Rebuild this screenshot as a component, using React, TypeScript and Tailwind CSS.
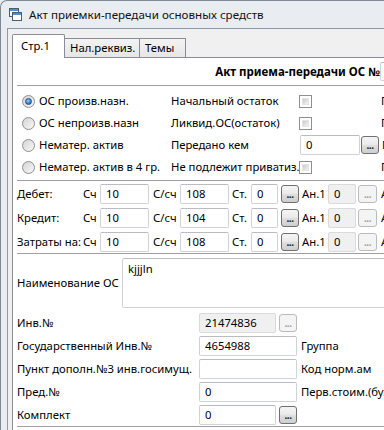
import clsx from 'clsx';

const font = "font-['Noto_Sans',sans-serif]";

function Box({ w, value, disabled, h = 'h-[20px]' }: { w: string; value?: string; disabled?: boolean; h?: string }) {
  return (
    <div
      className={clsx(
        'shrink-0 flex items-center overflow-hidden whitespace-nowrap rounded-[2px] border pl-[5px]',
        w,
        h,
        disabled ? 'bg-[#f0f0f0] border-[#d9dadc]' : 'bg-white border-[#cfd2d7] border-t-[#b9bcc2]'
      )}
    >
      {value}
    </div>
  );
}

function Dots({ disabled, w = 'w-[18px]', className }: { disabled?: boolean; w?: string; className?: string }) {
  return (
    <div
      className={clsx(
        'shrink-0 h-[18px] rounded-[3px] border flex items-end justify-center pb-[3px] text-[10px] leading-none font-bold tracking-[-0.5px]',
        w,
        className,
        disabled
          ? 'border-[#b8bcbf] bg-[#f4f4f4] text-[#a0a0a0]'
          : 'border-[#707070] bg-[linear-gradient(#f4f4f4,#ebebeb_45%,#dddddd_55%,#cfcfcf)] text-[#202020]'
      )}
    >
      ...
    </div>
  );
}

function Radio({ checked }: { checked?: boolean }) {
  return (
    <div className="shrink-0 w-[13px] h-[13px] rounded-full border border-[#8e8f8f] bg-[linear-gradient(135deg,#d4d4d4,#f8f8f8)] flex items-center justify-center">
      {checked && (
        <div className="w-[7px] h-[7px] rounded-full border border-[#1c4f8f] bg-[radial-gradient(circle_at_40%_35%,#8fd3ff,#2a6fc4_70%)]" />
      )}
    </div>
  );
}

function Check() {
  return (
    <div className="shrink-0 w-[13px] h-[13px] border border-[#8f8f8f] bg-white p-[2px]">
      <div className="w-full h-full bg-[linear-gradient(135deg,#cbcbcb,#f4f4f4)] border border-[#e4e4e4]" />
    </div>
  );
}

function WinIcon() {
  return (
    <svg width="13" height="13" viewBox="0 0 13 13" className="shrink-0">
      <rect x="0.5" y="0.5" width="9" height="8" fill="#fff" stroke="#4a5d75" />
      <rect x="1" y="1" width="8" height="2" fill="#4f8fd8" />
      <rect x="3.5" y="4.5" width="9" height="8" fill="#fff" stroke="#4a5d75" />
      <rect x="4" y="5" width="8" height="2" fill="#4f8fd8" />
    </svg>
  );
}

const radios = ['ОС произв.назн.', 'ОС непроизв.назн', 'Нематер. актив', 'Нематер. актив в 4 гр.'];

const accounts = [
  { label: 'Дебет:', sc: '10', ssc: '108' },
  { label: 'Кредит:', sc: '10', ssc: '104' },
  { label: 'Затраты на:', sc: '10', ssc: '108' },
];

const Line = () => <div className="h-px bg-[#a0a0a0]" />;

export default function App() {
  return (
    <div className={clsx('w-[384px] h-[430px] overflow-hidden bg-[#e9edf1] text-[11.3px] leading-[16px] text-black', font)}>
      <div className="w-[720px] h-full flex flex-col border-l border-t border-[#7d8996] rounded-tl-[7px]">
        {/* title bar */}
        <div className="h-[27px] shrink-0 flex items-center pl-[8px]">
          <WinIcon />
          <span className="ml-[7px] text-[11.6px] text-[#111]">Акт приемки-передачи основных средств</span>
        </div>

        {/* client area */}
        <div className="flex-1 ml-[6px] border-l border-t border-[#8d99a6] bg-[#f0f0f0] pl-[4px] pt-[5px] flex flex-col">
          {/* tabs */}
          <div className="flex items-end h-[23px] shrink-0">
            <div className="relative z-10 -mb-px w-[53px] h-[24px] bg-white border border-b-0 border-[#898c95] rounded-t-[2px] pl-[8px] flex items-center pb-px">
              Стр.1
            </div>
            <div className="w-[75px] h-[19px] border-t border-r border-[#898c95] bg-[linear-gradient(#f3f3f3,#e6e6e6)] pl-[5px] flex items-center">
              Нал.реквиз.
            </div>
            <div className="w-[46px] h-[19px] border-t border-r border-[#898c95] bg-[linear-gradient(#f3f3f3,#e6e6e6)] pl-[5px] flex items-center">
              Темы
            </div>
          </div>

          {/* panel */}
          <div className="flex-1 border-l border-t border-[#898c95] bg-white pl-[4px]">
            <div className="h-[27px] flex items-center">
              <div className="w-[363px] shrink-0 text-right font-bold text-[11.5px]">Акт приема-передачи ОС №</div>
              <Box w="w-[80px]" h="h-[19px]" />
            </div>
            <Line />

            {/* type + flags */}
            <div className="flex pt-[4px] pb-[2px]">
              <div className="w-[154px] shrink-0 flex flex-col pl-[5px]">
                {radios.map((r, i) => (
                  <div key={r} className="h-[22px] flex items-center gap-[4px] whitespace-nowrap">
                    <Radio checked={i === 0} />
                    {r}
                  </div>
                ))}
              </div>
              <div className="flex flex-col">
                <div className="h-[22px] flex items-center whitespace-nowrap">
                  <span className="w-[128px] shrink-0">Начальный остаток</span>
                  <Check />
                  <span className="ml-[69px]">Подразделение</span>
                </div>
                <div className="h-[22px] flex items-center whitespace-nowrap">
                  <span className="w-[128px] shrink-0">Ликвид.ОС(остаток)</span>
                  <Check />
                  <span className="ml-[69px]">Поставщик</span>
                </div>
                <div className="h-[22px] flex items-center whitespace-nowrap">
                  <span className="w-[129px] shrink-0">Передано кем</span>
                  <Box w="w-[60px]" value="0" />
                  <Dots className="ml-px" />
                  <span className="ml-[3px]">Получатель</span>
                </div>
                <div className="h-[22px] flex items-center whitespace-nowrap">
                  <span className="w-[128px] shrink-0">Не подлежит приватиз.</span>
                  <Check />
                  <span className="ml-[69px]">Причина</span>
                </div>
              </div>
            </div>
            <Line />

            {/* accounts */}
            <div className="flex flex-col gap-[4px] pt-[3px] pb-[1px]">
              {accounts.map((a) => (
                <div key={a.label} className="h-[20px] flex items-center whitespace-nowrap">
                  <span className="w-[66px] shrink-0">{a.label}</span>
                  <span className="w-[17px] shrink-0">Сч</span>
                  <Box w="w-[49px]" value={a.sc} />
                  <span className="w-[31px] shrink-0 pl-[4px]">С/сч</span>
                  <Box w="w-[49px]" value={a.ssc} />
                  <span className="w-[22px] shrink-0 pl-[3px]">Ст.</span>
                  <Box w="w-[27px]" value="0" />
                  <Dots className="ml-[3px]" />
                  <span className="w-[29px] shrink-0 pl-[3px]">Ан.1</span>
                  <Box w="w-[28px]" value="0" disabled />
                  <Dots disabled w="w-[19px]" className="ml-[2px]" />
                  <span className="pl-[4px]">Ан.2</span>
                </div>
              ))}
            </div>
            <Line />

            {/* name */}
            <div className="flex items-center pt-[4px]">
              <span className="w-[105px] shrink-0 whitespace-nowrap">Наименование ОС</span>
              <div className="w-[420px] h-[50px] shrink-0 border border-[#cfd2d7] border-t-[#b9bcc2] rounded-[2px] pl-[5px] pt-[2px]">
                kjjjln
              </div>
            </div>

            {/* numbers */}
            <div className="flex flex-col mt-[3px]">
              <div className="h-[23px] flex items-center whitespace-nowrap">
                <span className="w-[182px] shrink-0">Инв.№</span>
                <Box w="w-[77px]" value="21474836" disabled />
                <Dots disabled className="ml-[3px]" />
              </div>
              <div className="h-[23px] flex items-center whitespace-nowrap">
                <span className="w-[182px] shrink-0">Государственный Инв.№</span>
                <Box w="w-[98px]" value="4654988" />
                <span className="ml-[4px]">Группа</span>
              </div>
              <div className="h-[23px] flex items-center whitespace-nowrap">
                <span className="w-[182px] shrink-0">Пункт дополн.№3 инв.госимущ.</span>
                <Box w="w-[98px]" />
                <span className="ml-[4px]">Код норм.ам</span>
              </div>
              <div className="h-[23px] flex items-center whitespace-nowrap">
                <span className="w-[182px] shrink-0">Пред.№</span>
                <Box w="w-[98px]" value="0" />
                <span className="ml-[4px]">Перв.стоим.(бух.)</span>
              </div>
              <div className="h-[23px] flex items-center whitespace-nowrap">
                <span className="w-[182px] shrink-0">Комплект</span>
                <Box w="w-[77px]" value="0" />
                <Dots className="ml-[3px]" />
              </div>
            </div>
            <Line />
          </div>
        </div>
      </div>
    </div>
  );
}
